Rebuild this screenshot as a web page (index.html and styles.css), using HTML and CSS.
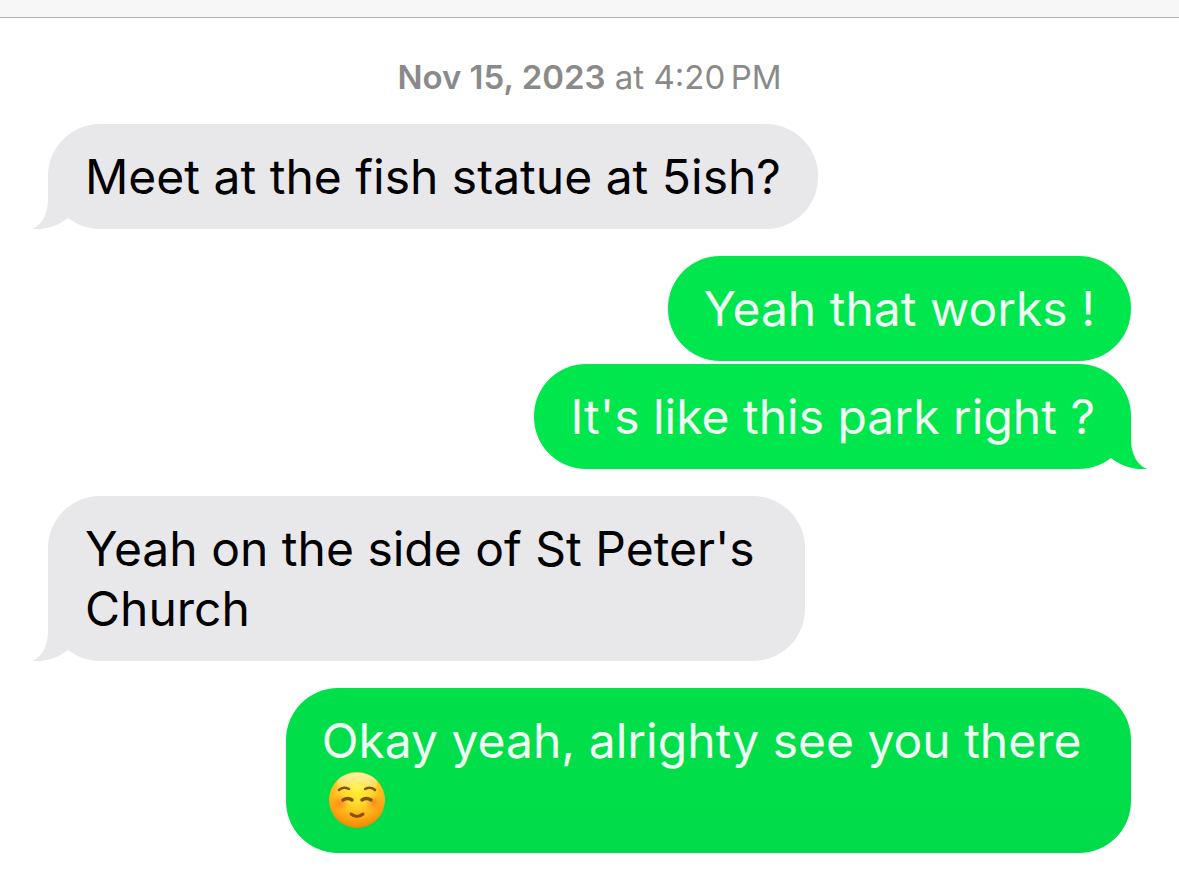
FILE: index.html
```
<!DOCTYPE html>
<html lang="en">
<head>
	<meta charset="utf-8">
	<title>Messages</title>
	<link rel="stylesheet" href="styles.css">
</head>
<body>
	<header class="topbar"></header>
	<main class="thread">
		<time class="stamp" datetime="2023-11-15T16:20"><strong>Nov 15, 2023</strong> at 4:20&#8198;PM</time>

		<div class="group received">
			<p class="bubble">Meet at the fish statue at 5ish?
				<svg class="tail" viewBox="0 0 40 52" aria-hidden="true"><path d="M16 0V22C16 37 10 48 0 52C14 53 26 49 36 41L40 0Z"/></svg>
			</p>
		</div>

		<div class="group sent">
			<p class="bubble">Yeah that works !</p>
			<p class="bubble">It's like this park right ?
				<svg class="tail" viewBox="0 0 40 52" aria-hidden="true"><path d="M16 0V22C16 37 10 48 0 52C14 53 26 49 36 41L40 0Z"/></svg>
			</p>
		</div>

		<div class="group received">
			<p class="bubble">Yeah on the side of St Peter's&nbsp;<br>Church
				<svg class="tail" viewBox="0 0 40 52" aria-hidden="true"><path d="M16 0V22C16 37 10 48 0 52C14 53 26 49 36 41L40 0Z"/></svg>
			</p>
		</div>

		<div class="group sent">
			<p class="bubble last">Okay yeah, alrighty see you there&nbsp;<br>
				<svg class="emoji" viewBox="0 0 58 58" role="img" aria-label="smiling face">
					<defs>
						<radialGradient id="face" cx="50%" cy="30%" r="72%">
							<stop offset="0" stop-color="#fff02e"/>
							<stop offset=".4" stop-color="#ffd82b"/>
							<stop offset=".75" stop-color="#ffa612"/>
							<stop offset="1" stop-color="#ec8200"/>
						</radialGradient>
						<linearGradient id="shine" x1="0" y1="0" x2="0" y2="1">
							<stop offset="0" stop-color="#fff" stop-opacity=".6"/>
							<stop offset="1" stop-color="#fff" stop-opacity="0"/>
						</linearGradient>
						<radialGradient id="blush">
							<stop offset="0" stop-color="#ff6a1c" stop-opacity=".65"/>
							<stop offset="1" stop-color="#ff7a1c" stop-opacity="0"/>
						</radialGradient>
					</defs>
					<circle cx="29" cy="29" r="28" fill="url(#face)"/>
					<ellipse cx="29" cy="12" rx="20" ry="10" fill="url(#shine)"/>
					<circle cx="12" cy="32" r="9" fill="url(#blush)"/>
					<circle cx="46" cy="32" r="9" fill="url(#blush)"/>
					<g fill="none" stroke="#84500f" stroke-linecap="round">
						<path d="M11 19Q15 15 21 18M37 18Q43 15 47 19" stroke-width="2.5"/>
						<path d="M15 29Q20 26 24 29M34 29Q38 26 43 29" stroke-width="3.5"/>
						<path d="M23 43Q29 48 35 43" stroke-width="3"/>
					</g>
				</svg>
			</p>
		</div>
	</main>
</body>
</html>
```
FILE: styles.css
```
* {
	box-sizing: border-box;
}
body {
	margin: 0;
	background: #fff;
	color: #000;
	font-family: Inter, "Liberation Sans", sans-serif;
}
.topbar {
	height: 18px;
	background: #f7f7f7;
	border-bottom: 1px solid #b0b0b0;
}
.thread {
	display: flex;
	flex-direction: column;
	gap: 27px;
	padding: 39px 48px 32px;
}
.stamp {
	align-self: center;
	color: #8a8a8a;
	font-size: 33px;
	line-height: 40px;
}
.stamp strong {
	font-weight: 600;
}
.group {
	display: flex;
	flex-direction: column;
	align-items: flex-start;
	gap: 3px;
}
.sent {
	align-items: flex-end;
}
.bubble {
	position: relative;
	margin: 0;
	padding: 23px 37px 22px;
	border-radius: 52px;
	background: #e8e8ea;
	font-size: 48px;
	line-height: 60px;
}
.sent .bubble {
	padding: 23px 36px 22px;
	background: #00e64d;
	color: #f0fff4;
}
.sent .last {
	background: linear-gradient(#00e04b, #00dc49);
}
.tail {
	position: absolute;
	left: -16px;
	bottom: 0;
	width: 40px;
	height: 52px;
	fill: #e8e8ea;
}
.sent .tail {
	left: auto;
	right: -16px;
	fill: #00e64d;
	transform: scaleX(-1);
}
.emoji {
	display: inline-block;
	width: 58px;
	height: 58px;
	margin-left: 6px;
	vertical-align: top;
}
```
